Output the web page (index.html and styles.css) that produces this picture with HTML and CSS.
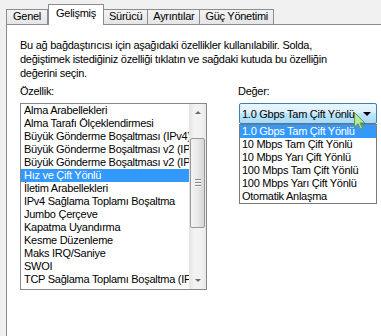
FILE: index.html
```html
<!doctype html>
<html lang="tr">
<head>
<meta charset="utf-8">
<title>Gelişmiş</title>
<link rel="stylesheet" href="styles.css">
</head>
<body>

<div class="tab-strip">
    <span class="tab">Genel</span>
    <span class="tab active">Gelişmiş</span>
    <span class="tab">Sürücü</span>
    <span class="tab">Ayrıntılar</span>
    <span class="tab">Güç Yönetimi</span>
</div>

<div class="tab-panel">
    <p class="intro">Bu ağ bağdaştırıcısı için aşağıdaki özellikler kullanılabilir. Solda,<br>
    değiştimek istediğiniz özelliği tıklatın ve sağdaki kutuda bu özelliğin<br>
    değerini seçin.</p>

    <div class="columns">
        <div class="prop-column">
            <div class="field-label">Özellik:</div>
            <div class="listbox">
                <ul class="list-items">
                    <li>Alma Arabellekleri</li>
                    <li>Alma Tarafı Ölçeklendirmesi</li>
                    <li>Büyük Gönderme Boşaltması (IPv4)</li>
                    <li>Büyük Gönderme Boşaltması v2 (IPv4)</li>
                    <li>Büyük Gönderme Boşaltması v2 (IPv6)</li>
                    <li class="selected">Hız ve Çift Yönlü</li>
                    <li>İletim Arabellekleri</li>
                    <li>IPv4 Sağlama Toplamı Boşaltma</li>
                    <li>Jumbo Çerçeve</li>
                    <li>Kapatma Uyandırma</li>
                    <li>Kesme Düzenleme</li>
                    <li>Maks IRQ/Saniye</li>
                    <li>SWOI</li>
                    <li>TCP Sağlama Toplamı Boşaltma (IPv4)</li>
                </ul>
                <div class="scrollbar">
                    <span class="scroll-btn"><span class="arrow-up"></span></span>
                    <div class="scroll-track">
                        <div class="scroll-thumb">
                            <span class="grip"></span>
                            <span class="grip"></span>
                            <span class="grip"></span>
                        </div>
                    </div>
                    <span class="scroll-btn"><span class="arrow-down"></span></span>
                </div>
            </div>
        </div>

        <div class="value-column">
            <div class="field-label">Değer:</div>
            <div class="combo">
                <span class="combo-text">1.0 Gbps Tam Çift Yönlü</span>
                <span class="combo-arrow"></span>

                <ul class="dropdown">
                    <li class="selected">1.0 Gbps Tam Çift Yönlü</li>
                    <li>10 Mbps Tam Çift Yönlü</li>
                    <li>10 Mbps Yarı Çift Yönlü</li>
                    <li>100 Mbps Tam Çift Yönlü</li>
                    <li>100 Mbps Yarı Çift Yönlü</li>
                    <li>Otomatik Anlaşma</li>
                </ul>

                <svg class="cursor" width="12" height="18" viewBox="0 0 12 18">
                    <path d="M0.5 0.5 L0.5 15 L4 11.8 L6.6 17.2 L8.6 16.3 L6.1 11 L10.8 11 Z" fill="#b9e4a0" stroke="#5c9a45" stroke-width="1"/>
                </svg>
            </div>
        </div>
    </div>
</div>

</body>
</html>
```

FILE: styles.css
```css
body {
    margin: 0;
    font-family: "Liberation Sans", Arial, sans-serif;
    font-size: 11px;
    letter-spacing: -0.27px;
    color: #000000;
    background-color: #f0f0f0;
    overflow: hidden;
}

/* tab header */
.tab-strip {
    display: flex;
    align-items: flex-end;
    padding: 4px 0 0 6px;
    height: 20px;
}

.tab {
    position: relative;
    height: 14px;
    line-height: 13px;
    padding: 0 5px;
    margin-left: -1px;
    border: 1px solid #898c95;
    border-bottom: none;
    background: linear-gradient(#f3f3f3, #e5e5e5);
}

.tab:first-child {
    margin-left: 0;
    padding: 0 6px;
}

.tab.active {
    z-index: 1;
    height: 20px;
    line-height: 17px;
    margin: 0 0 -1px 0;
    padding: 0 7px;
    background: #ffffff;
}

/* panel */
.tab-panel {
    box-sizing: border-box;
    margin-left: 6px;
    height: calc(100vh - 24px);
    padding: 13px 0 0 13px;
    border-left: 1px solid #898c95;
    border-top: 1px solid #898c95;
    background-color: #ffffff;
}

.intro {
    margin: 0;
    line-height: 14px;
    white-space: nowrap;
}

.columns {
    display: flex;
    gap: 31px;
    margin-top: 5px;
}

.field-label {
    line-height: 13px;
    margin-bottom: 5px;
}

/* property list */
.listbox {
    display: flex;
    box-sizing: border-box;
    width: 187px;
    height: 187px;
    border: 1px solid #828790;
}

.list-items {
    flex: 1;
    margin: 0;
    padding: 0;
    list-style: none;
    overflow: hidden;
}

.list-items li {
    height: 13px;
    line-height: 13px;
    padding-left: 3px;
    white-space: nowrap;
    overflow: hidden;
}

.list-items li.selected,
.dropdown li.selected {
    background-color: #3399ff;
    color: #ffffff;
}

.scrollbar {
    display: flex;
    flex-direction: column;
    width: 17px;
    background: linear-gradient(to right, #e3e3e3, #f2f2f2 30%, #f2f2f2 70%, #e8e8e8);
}

.scroll-btn {
    display: flex;
    align-items: center;
    justify-content: center;
    height: 17px;
}

.arrow-up,
.arrow-down {
    width: 0;
    height: 0;
    border-left: 3px solid transparent;
    border-right: 3px solid transparent;
}

.arrow-up {
    border-bottom: 3px solid #6a6a6a;
}

.arrow-down {
    border-top: 3px solid #6a6a6a;
}

.scroll-track {
    flex: 1;
}

.scroll-thumb {
    display: flex;
    flex-direction: column;
    align-items: center;
    justify-content: center;
    gap: 1px;
    box-sizing: border-box;
    height: 90px;
    margin: 17px 1px 0 1px;
    border: 1px solid #979797;
    border-radius: 2px;
    background: linear-gradient(to right, #f4f4f4, #e8e8e8 50%, #d6d6d6);
}

.grip {
    width: 6px;
    height: 1px;
    background-color: #8a8a8a;
    border-bottom: 1px solid #f8f8f8;
}

/* value combo */
.combo {
    position: relative;
    display: flex;
    align-items: center;
    box-sizing: border-box;
    width: 138px;
    height: 21px;
    margin-left: 1px;
    padding-left: 2px;
    border: 1px solid #3c7fb1;
    border-radius: 2px;
    background: linear-gradient(#eaf6fd, #d9f0fc 45%, #bee6fd 50%, #a7d9f5);
}

.combo-text {
    flex: 1;
    white-space: nowrap;
}

.combo-arrow {
    width: 0;
    height: 0;
    margin-right: 5px;
    border-left: 4px solid transparent;
    border-right: 4px solid transparent;
    border-top: 4px solid #000000;
}

.dropdown {
    position: absolute;
    top: 100%;
    left: -1px;
    width: 138px;
    box-sizing: border-box;
    margin: 1px 0 0 0;
    padding: 0;
    list-style: none;
    border: 1px solid #7a7a7a;
    background-color: #ffffff;
}

.dropdown li {
    height: 13px;
    line-height: 13px;
    padding-left: 2px;
    white-space: nowrap;
}

.cursor {
    position: absolute;
    left: 114px;
    top: 8px;
}
```
